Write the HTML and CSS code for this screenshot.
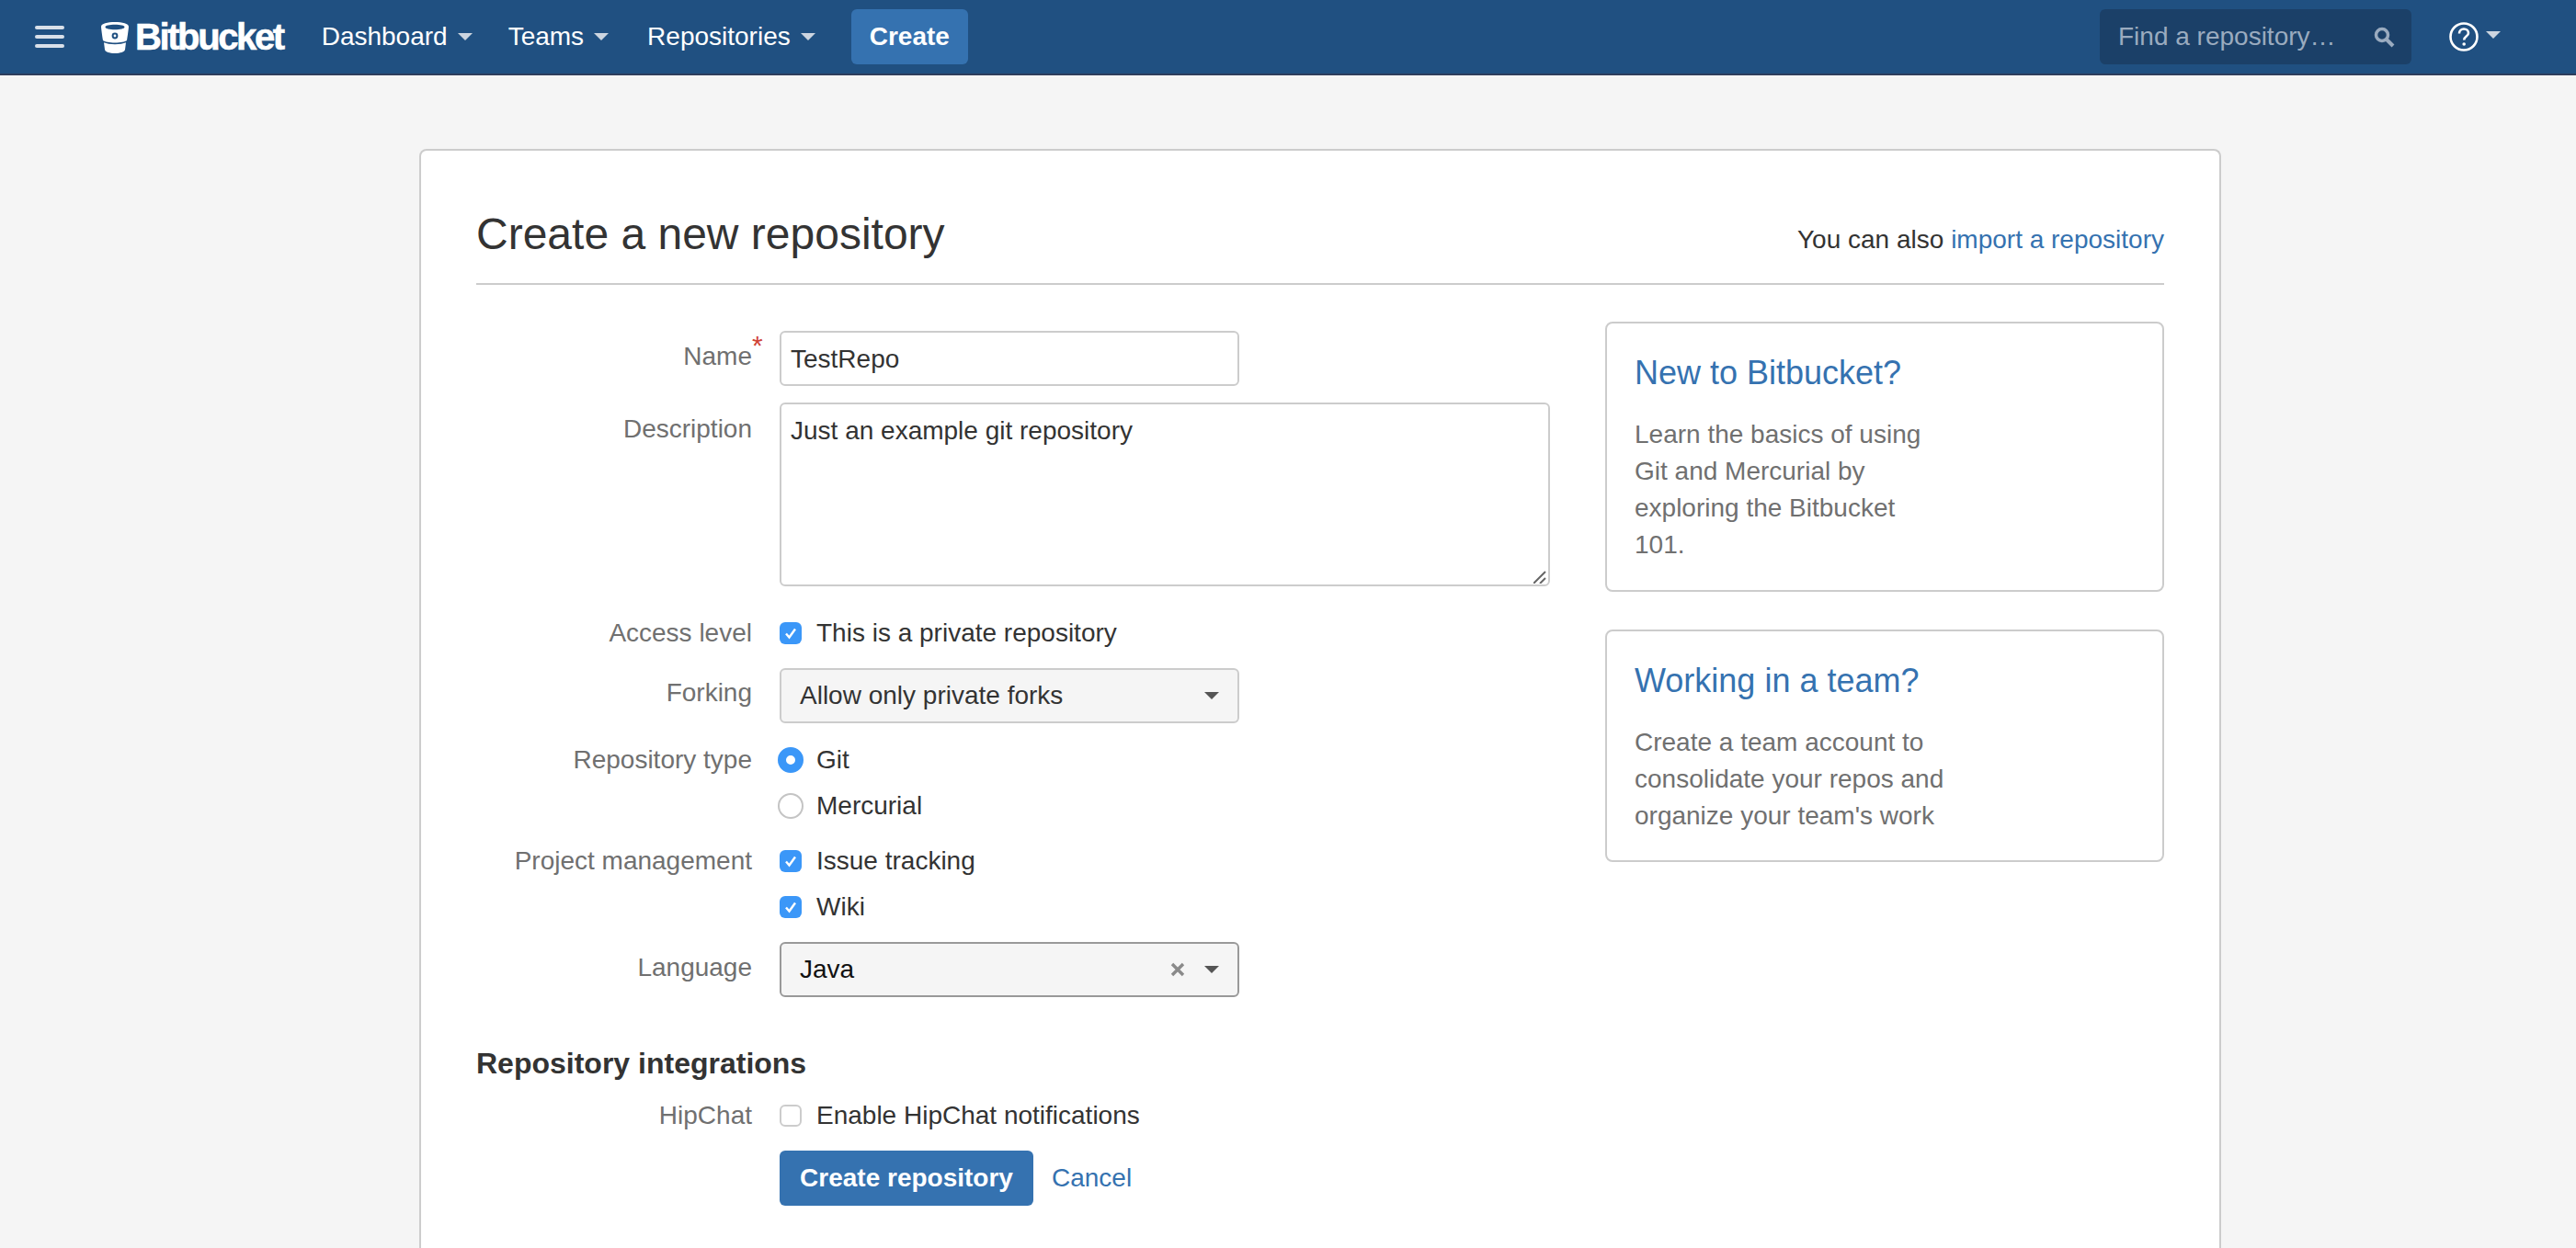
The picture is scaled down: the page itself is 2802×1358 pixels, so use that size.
FILE: index.html
```html
<!DOCTYPE html>
<html lang="en">
<head>
    <meta charset="UTF-8">
    <title>Create a new repository</title>
    <link rel="stylesheet" href="styles.css">
</head>
<body>
    <header class="topbar">
        <div class="menu-icon"><span></span><span></span><span></span></div>
        <a class="logo">
            <svg class="logo-mark" viewBox="0 0 30 34" width="30" height="34">
                <path fill="#fff" fill-rule="evenodd" d="M15 0C7 0 0 1.600 0 5c0 1 .8 7.500 2 15 2 1.300 7 2.600 13 2.600s11-1.300 13-2.600c1.200-7.500 2-14 2-15 0-3.400-7-5-15-5zm0 2.800c5.800 0 10.500 1 10.500 2.700S20.800 8.200 15 8.200 4.500 7.200 4.500 5.500 9.200 2.800 15 2.800z"/>
                <path fill="#fff" d="M3 22.300c3 1.200 7 1.900 12 1.900s9-.7 12-1.900L26 30c-.3 2.400-5 4-11 4S4.300 32.400 4 30z"/>
                <circle cx="15" cy="15" r="3.400" fill="#205081"/>
                <circle cx="15" cy="15" r="1.400" fill="#fff"/>
            </svg>
            <span class="logo-text">Bitbucket</span>
        </a>
        <nav class="nav">
            <a class="nav-item nav-dashboard">Dashboard<i class="caret"></i></a>
            <a class="nav-item nav-teams">Teams<i class="caret"></i></a>
            <a class="nav-item nav-repos">Repositories<i class="caret"></i></a>
            <a class="nav-create">Create</a>
        </nav>
        <div class="search">
            <span>Find a repository…</span>
            <svg viewBox="0 0 24 24" width="24" height="24">
                <circle cx="10" cy="10" r="6.500" fill="none" stroke="#9aabbf" stroke-width="3.500"/>
                <path d="M15 15l7 7" stroke="#9aabbf" stroke-width="4"/>
            </svg>
        </div>
        <a class="help">
            <svg viewBox="0 0 32 32" width="32" height="32">
                <circle cx="16" cy="16" r="14.500" fill="none" stroke="#fff" stroke-width="2.600"/>
                <path d="M11 12.500c0-3 2.200-5 5-5s5 1.900 5 4.500c0 3.600-4.800 3.600-4.800 7.500" fill="none" stroke="#fff" stroke-width="2.600"/>
                <circle cx="16.200" cy="24" r="1.800" fill="#fff"/>
            </svg>
            <i class="caret"></i>
        </a>
    </header>

    <main class="card">
        <div class="page-head">
            <h1>Create a new repository</h1>
            <p>You can also <a>import a repository</a></p>
        </div>

        <div class="columns">
            <form class="repo-form">
                <div class="row row-name">
                    <label>Name<sup>*</sup></label>
                    <input class="text-input" type="text" value="TestRepo">
                </div>
                <div class="row row-desc">
                    <label>Description</label>
                    <div class="area-wrap">
                        <textarea class="text-area">Just an example git repository</textarea>
                        <svg class="grip" viewBox="0 0 14 14" width="14" height="14"><path d="M0 14L13 1M7 14l6-6" stroke="#666" stroke-width="2"/></svg>
                    </div>
                </div>
                <div class="row row-access">
                    <label>Access level</label>
                    <div class="opt"><span class="check on"><svg viewBox="0 0 24 24" width="24" height="24"><path d="M7 12.500l3.500 4L17 7.500" fill="none" stroke="#fff" stroke-width="2.400"/></svg></span>This is a private repository</div>
                </div>
                <div class="row row-fork">
                    <label>Forking</label>
                    <div class="select"><span>Allow only private forks</span><i class="arrow"></i></div>
                </div>
                <div class="row row-type">
                    <label>Repository type</label>
                    <div class="opts">
                        <div class="opt"><span class="radio on"></span>Git</div>
                        <div class="opt"><span class="radio"></span>Mercurial</div>
                    </div>
                </div>
                <div class="row row-pm">
                    <label>Project management</label>
                    <div class="opts">
                        <div class="opt"><span class="check on"><svg viewBox="0 0 24 24" width="24" height="24"><path d="M7 12.500l3.500 4L17 7.500" fill="none" stroke="#fff" stroke-width="2.400"/></svg></span>Issue tracking</div>
                        <div class="opt"><span class="check on"><svg viewBox="0 0 24 24" width="24" height="24"><path d="M7 12.500l3.500 4L17 7.500" fill="none" stroke="#fff" stroke-width="2.400"/></svg></span>Wiki</div>
                    </div>
                </div>
                <div class="row row-lang">
                    <label>Language</label>
                    <div class="select select-focus">
                        <span>Java</span>
                        <svg class="clear" viewBox="0 0 16 16" width="16" height="16"><path d="M2 2l12 12M14 2L2 14" stroke="#8a8a8a" stroke-width="3.400"/></svg>
                        <i class="arrow"></i>
                    </div>
                </div>

                <h2>Repository integrations</h2>
                <div class="row row-hipchat">
                    <label>HipChat</label>
                    <div class="opt"><span class="check"></span>Enable HipChat notifications</div>
                </div>
                <div class="row row-actions">
                    <span></span>
                    <div class="actions">
                        <button type="button">Create repository</button>
                        <a>Cancel</a>
                    </div>
                </div>
            </form>

            <aside class="side">
                <section class="side-box">
                    <h3>New to Bitbucket?</h3>
                    <p>Learn the basics of using<br>Git and Mercurial by<br>exploring the Bitbucket<br>101.</p>
                </section>
                <section class="side-box">
                    <h3>Working in a team?</h3>
                    <p>Create a team account to<br>consolidate your repos and<br>organize your team's work</p>
                </section>
            </aside>
        </div>
    </main>
</body>
</html>
```

FILE: styles.css
```css
body {
    display: flex;
    flex-direction: column;
    box-sizing: border-box;
    height: 100vh;
    margin: 0;
    overflow: hidden;
    background-color: #f5f5f5;
    color: #333;
    font-family: "Liberation Sans", Arial, sans-serif;
    font-size: 28px;
}

a {
    color: #3572b0;
}

/* top bar */
.topbar {
    display: flex;
    flex: none;
    align-items: center;
    height: 80px;
    border-bottom: 2px solid #2e3d5c;
    background-color: #205081;
    color: #fff;
}

.menu-icon {
    display: flex;
    flex-direction: column;
    gap: 6px;
    width: 32px;
    margin-left: 38px;
}

.menu-icon span {
    height: 4px;
    border-radius: 2px;
    background-color: #d9e0e9;
}

.logo {
    display: flex;
    align-items: center;
    margin-left: 40px;
    color: #fff;
}

.logo-mark {
    margin-top: 2px;
}

.logo-text {
    margin-left: 7px;
    font-size: 40px;
    font-weight: bold;
    letter-spacing: -2.400px;
    line-height: 48px;
    -webkit-text-stroke: 0.6px #fff;
}

.nav {
    display: flex;
    align-items: center;
    margin-left: 42px;
}

.nav-item {
    display: flex;
    align-items: center;
    color: #fff;
}

.nav-teams {
    margin-left: 39px;
}

.nav-repos {
    margin-left: 42px;
}

.caret {
    display: inline-block;
    width: 0;
    height: 0;
    margin-left: 11px;
    border-top: 8px solid #ccd5e0;
    border-left: 8px solid transparent;
    border-right: 8px solid transparent;
}

.nav-create {
    margin-left: 39px;
    padding: 0 20px;
    border-radius: 6px;
    background-color: #3572b0;
    color: #fff;
    font-weight: bold;
    font-size: 28px;
    line-height: 60px;
}

.search {
    display: flex;
    align-items: center;
    justify-content: space-between;
    box-sizing: border-box;
    width: 339px;
    height: 60px;
    margin-left: auto;
    padding: 0 18px 0 20px;
    border-radius: 6px;
    background-color: #1b4068;
    color: #9aabbf;
}

.help {
    display: flex;
    align-items: center;
    margin-left: 41px;
    margin-right: 82px;
}

.help .caret {
    margin-left: 8px;
    margin-top: -4px;
}

/* main card, runs off the bottom of the window */
.card {
    flex: 1;
    box-sizing: border-box;
    width: 1960px;
    margin: 80px 0 0 456px;
    padding: 0 60px;
    border: 2px solid #ccc;
    border-bottom: 0;
    border-radius: 8px 8px 0 0;
    background-color: #fff;
}

.page-head {
    display: flex;
    justify-content: space-between;
    align-items: flex-start;
    height: 146px;
    box-sizing: border-box;
    padding-top: 63px;
    border-bottom: 2px solid #ccc;
}

h1 {
    margin: 0;
    font-size: 48px;
    font-weight: normal;
    line-height: 56px;
}

.page-head p {
    margin: 14px 0 0;
    line-height: 40px;
}

.columns {
    display: flex;
    justify-content: space-between;
    padding-top: 40px;
}

.repo-form {
    width: 1168px;
    padding-top: 10px;
}

.row {
    display: grid;
    grid-template-columns: 300px 1fr;
    column-gap: 30px;
    align-items: start;
}

.row label {
    color: #707070;
    line-height: 40px;
    text-align: right;
}

.row label sup {
    position: absolute;
    margin-top: -4px;
    color: #d04437;
    font-size: 30px;
    line-height: 24px;
}

.text-input, .text-area {
    box-sizing: border-box;
    padding: 0 10px;
    border: 2px solid #ccc;
    border-radius: 6px;
    color: #333;
    font-family: inherit;
    font-size: 28px;
    outline: none;
}

.text-input {
    width: 500px;
    height: 60px;
    padding-top: 2px;
}

.area-wrap {
    position: relative;
}

.text-area {
    display: block;
    width: 100%;
    height: 200px;
    padding-top: 13px;
    line-height: 32px;
    resize: none;
}

.grip {
    position: absolute;
    right: 4px;
    bottom: 3px;
}

.row-name label {
    padding-top: 8px;
}

.row-desc {
    margin-top: 18px;
}

.row-desc label {
    padding-top: 9px;
}

.row-access {
    margin-top: 31px;
}

.row-fork {
    margin-top: 18px;
}

.row-fork label {
    padding-top: 7px;
}

.row-type {
    margin-top: 20px;
}

.row-pm {
    margin-top: 20px;
}

.row-lang {
    margin-top: 18px;
}

.row-lang label {
    padding-top: 8px;
}

.row-hipchat {
    margin-top: 17px;
}

.row-actions {
    margin-top: 18px;
}

.opts {
    display: flex;
    flex-direction: column;
    gap: 10px;
}

.opt {
    display: flex;
    align-items: center;
    line-height: 40px;
}

.check {
    flex: none;
    box-sizing: border-box;
    width: 24px;
    height: 24px;
    margin-right: 16px;
    border: 2px solid #ccc;
    border-radius: 6px;
    background-color: #fff;
}

.check.on {
    border: 0;
    background-color: #3b97f8;
}

.check svg {
    display: block;
}

.radio {
    flex: none;
    box-sizing: border-box;
    width: 28px;
    height: 28px;
    margin: 0 14px 0 -2px;
    border: 2px solid #c4c4c4;
    border-radius: 50%;
    background-color: #fff;
}

.radio.on {
    border: 9px solid #3b97f8;
}

.select {
    display: flex;
    align-items: center;
    box-sizing: border-box;
    width: 500px;
    height: 60px;
    padding: 0 20px;
    border: 2px solid #ccc;
    border-radius: 6px;
    background-color: #f5f5f5;
}

.select span {
    margin-right: auto;
}

.select-focus {
    border-color: #999;
    color: #111;
}

.clear {
    margin-right: 21px;
}

.arrow {
    width: 0;
    height: 0;
    border-top: 8px solid #555;
    border-left: 8px solid transparent;
    border-right: 8px solid transparent;
}

h2 {
    margin: 52px 0 0;
    font-size: 32px;
    line-height: 40px;
}

.actions {
    display: flex;
    align-items: center;
    gap: 20px;
}

button {
    width: 276px;
    height: 60px;
    padding: 0;
    border: 0;
    border-radius: 6px;
    background-color: #3572b0;
    color: #fff;
    font-family: inherit;
    font-size: 28px;
    font-weight: bold;
}

/* sidebar */
.side {
    display: flex;
    flex-direction: column;
    gap: 41px;
    width: 608px;
}

.side-box {
    box-sizing: border-box;
    padding: 32px 30px 0;
    border: 2px solid #ccc;
    border-radius: 8px;
}

.side-box:first-child {
    height: 294px;
}

.side-box:last-child {
    height: 253px;
}

h3 {
    margin: 0;
    color: #3572b0;
    font-size: 36px;
    font-weight: normal;
    line-height: 44px;
}

.side-box p {
    margin: 25px 0 0;
    color: #707070;
    line-height: 40px;
}
```
